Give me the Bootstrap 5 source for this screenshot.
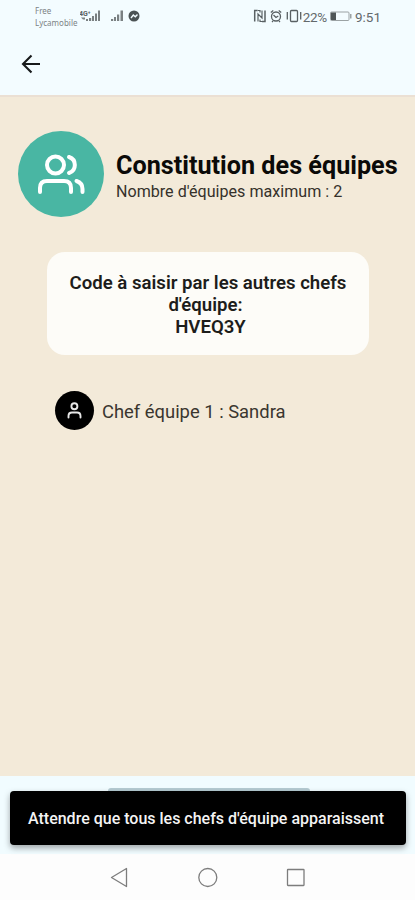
<!DOCTYPE html>
<html lang="fr">
<head>
<meta charset="utf-8">
<meta name="viewport" content="width=device-width, initial-scale=1">
<title>Constitution des équipes</title>
<link href="https://cdn.jsdelivr.net/npm/bootstrap@5.3.0/dist/css/bootstrap.min.css" rel="stylesheet">
<style>
body{font-family:Roboto,"Liberation Sans",sans-serif;background:#f3ead9;color:#0b0a08;height:900px;overflow:hidden}
svg{display:block;flex:none}
.app-top{height:97px;background:#f3fcff;border-bottom:2px solid #ebe0d4}
.status{height:33px;padding:0 34px 0 35px;color:#63696b}
.carriers{font-size:8px;line-height:12px;width:45px;padding-top:5px;color:#7c8385;font-family:"Noto Sans",sans-serif}
.pct{font-size:13.5px;line-height:16px;white-space:nowrap}
.pct-a{letter-spacing:-.3px}
.back{margin:21px 0 0 20px}
.team-head{padding:34px 0 0 18px;gap:12px}
.disc{width:86px;height:86px;background:#49b6a3}
.titles{padding-top:19px}
.page-title{font-size:25.2px;line-height:31px;font-weight:700;white-space:nowrap}
.page-sub{font-size:16.1px;line-height:22px;color:#35312b;white-space:nowrap}
.code-card{margin:35px 46px 0 47px;height:103px;border-radius:18px;background:#fdfcf8;font-size:18.6px;line-height:22px;font-weight:600;color:#1d1d1b;padding-top:20px}
.code-mid{padding-right:5px}
.code-val{padding-left:5px}
.chief{margin:36px 0 0 55px;gap:8px;font-size:18.4px;color:#3a362f}
.chief-disc{width:39px;height:39px;background:#000}
.chief-name{padding-top:2px}
.app-bottom{height:124px;background:#fdfdfd}
.dock{height:78px;background:#f1fcff;padding:12px 9px 0 10px}
.under-btn{height:3px;width:202px;margin-left:98px;background:#b5cbd2;border-radius:3px 3px 0 0}
.snack{height:54px;background:#000;color:#f4f4f4;border-radius:4px;font-size:16px;font-weight:500;box-shadow:0 3px 6px rgba(0,0,0,.35);padding:2px 0 0 18px;white-space:nowrap;position:relative}
.sys-nav{height:46px;padding-left:109px}
</style>
<script src="https://cdn.jsdelivr.net/npm/bootstrap@5.3.0/dist/js/bootstrap.bundle.min.js"></script>
</head>
<body class="d-flex flex-column m-0">
<header class="app-top flex-shrink-0">
  <div class="status d-flex justify-content-between">
    <div class="d-flex">
      <div class="carriers"><div>Free</div><div>Lycamobile</div></div>
      <svg width="62" height="33" viewBox="80 0 62 33" fill="#7a8082">
        <text x="79" y="15.500" font-size="7" font-weight="700" fill="#596063">4G⁺</text>
        <path d="M81 17.500h4v2h-2zM86 19h2v2h-2zM89 18h2.200v3H89zM92 16h2v5h-2zM95 13.500h2V21h-2zM98 10.500h2V21h-2z"/>
        <path d="M111 19h2.200v2H111zM114 17h2v4h-2zM117 14.500h2.200V21H117zM120.500 10.500h2.500V21h-2.500z"/>
        <circle cx="134" cy="16" r="5.500" fill="#4b5254"/><path d="M131 18l2.300-3 2 1.800 2.200-2.300" fill="none" stroke="#f3fcff" stroke-width="1.400"/>
      </svg>
    </div>
    <div class="d-flex align-items-center">
      <svg width="50" height="33" viewBox="252 0 50 33" fill="none" stroke="#596063" stroke-width="1.300">
        <path d="M253.700 21.500v-11h3M264 10.500v11h-3" stroke-width="1.500"/><path d="M257 21.500v-7.500l4 4v-7.500M257 10.500h2v2M261 21.500h-2v-2" stroke-width="1.200"/>
        <circle cx="275" cy="16.500" r="4.500"/><path d="M269.800 12.500l2.500-2M280.200 12.500l-2.500-2M272.500 15l2.500 2.500 2.300-1.500M272 21l-1 1M278 21l1 1"/>
        <rect x="289.500" y="10.500" width="7" height="11" rx="1"/><path d="M286.300 12v7.500M299.700 12v7.500"/>
      </svg>
      <span class="pct pct-a">22%</span>
      <svg width="28" height="33" viewBox="328 0 28 33"><rect x="331.500" y="12" width="18.500" height="8.500" rx="1" fill="none" stroke="#9ba2a4"/><path d="M332 12.500h5v7.500h-5z" fill="#4e5658"/><path d="M351 14h1.500v4.500H351z" fill="#9ba2a4"/></svg>
      <span class="pct">9:51</span>
    </div>
  </div>
  <svg class="back" width="22" height="20" viewBox="20 54 22 20" fill="none" stroke="#171a1b" stroke-width="2.100"><path d="M40 64H23M31.500 55.500L23 64l8.500 8.500"/></svg>
</header>
<main class="flex-grow-1">
  <div class="team-head d-flex align-items-start">
    <div class="disc rounded-circle flex-shrink-0">
      <svg width="86" height="86" viewBox="18 131 86 86" fill="none" stroke="#fff" stroke-width="4" stroke-linecap="round" stroke-linejoin="round"><circle cx="55.500" cy="165" r="8.500"/><path d="M69 157a8.400 8.400 0 0 1 0 16M40 192v-4q0-7 7-7h17q7 0 7 7v4M76.500 181q6 2 6 8v3"/></svg>
    </div>
    <div class="titles">
      <h1 class="page-title m-0">Constitution des équipes</h1>
      <div class="page-sub">Nombre d'équipes maximum : 2</div>
    </div>
  </div>
  <section class="code-card text-center">
    <div>Code à saisir par les autres chefs</div>
    <div class="code-mid">d'équipe:</div>
    <div class="code-val">HVEQ3Y</div>
  </section>
  <div class="chief d-flex align-items-center">
    <div class="chief-disc rounded-circle flex-shrink-0">
      <svg width="39" height="39" viewBox="55 391 39 39" fill="none" stroke="#e8e8e8" stroke-width="1.900" stroke-linecap="round"><circle cx="74.400" cy="406.300" r="3"/><path d="M68.500 417.500v-1.500q0-3.500 3.500-3.500h5q3.500 0 3.500 3.500v1.500"/></svg>
    </div>
    <span class="chief-name">Chef équipe 1 : Sandra</span>
  </div>
</main>
<footer class="app-bottom flex-shrink-0">
  <div class="dock">
    <div class="under-btn"></div>
    <div class="snack d-flex align-items-center">Attendre que tous les chefs d'équipe apparaissent</div>
  </div>
  <nav class="sys-nav d-flex align-items-center" aria-label="Navigation système">
    <svg width="196" height="46" viewBox="109 854 196 46" fill="none" stroke="#7d7d7d" stroke-width="1.300" stroke-linejoin="round"><path d="M111.500 877.500l15-9v18z"/><circle cx="207.800" cy="877.500" r="9"/><rect x="287.500" y="869.500" width="16.500" height="16" rx=".5"/></svg>
  </nav>
</footer>
</body>
</html>
